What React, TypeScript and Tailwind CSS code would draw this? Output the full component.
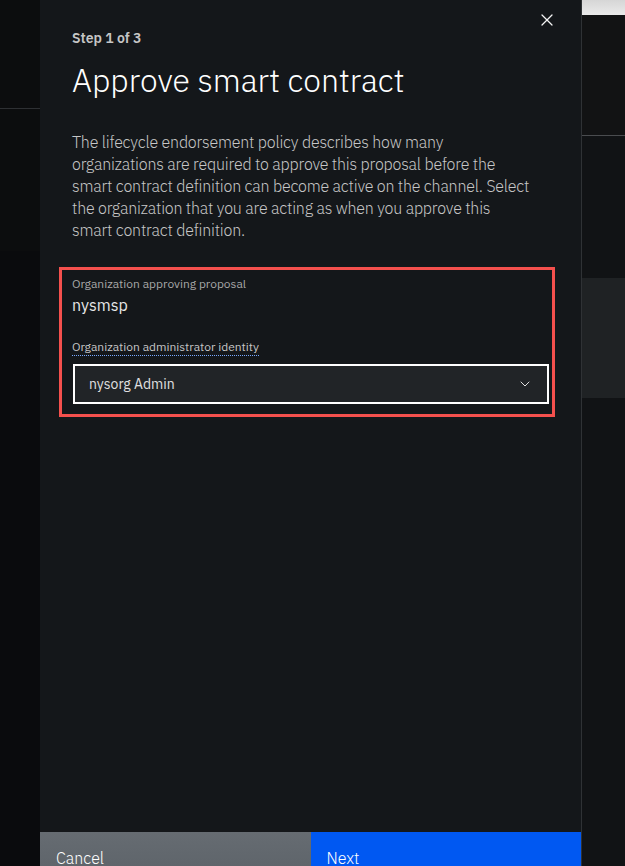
import React from "react";
import { X, ChevronDown } from "lucide-react";

const font = { fontFamily: '"IBM Plex Sans", Roboto, "Noto Sans", sans-serif' };

const App: React.FC = () => {
  return (
    <div
      className="flex h-[866px] w-full overflow-hidden bg-[#0b0c0e] text-[#f4f4f4]"
      style={font}
    >
      {/* left page behind the panel */}
      <div className="flex w-[40px] shrink-0 flex-col">
        <div className="h-[109px] border-b border-[#2e3033] bg-[#0c0d0e]" />
        <div className="h-[142px] bg-[#0c0d0e]" />
        <div className="flex-1 bg-[#0a0b0d]" />
      </div>

      {/* side panel */}
      <div className="relative flex w-[542px] shrink-0 flex-col border-r border-[#2f3235] bg-[#14171a]">
        <button className="absolute right-[24px] top-[10px] text-[#f4f4f4]">
          <X className="h-[20px] w-[20px]" strokeWidth={1.5} />
        </button>

        <div className="flex-1 px-8 pt-[29px]">
          <p className="text-[14px] font-semibold leading-[18px] text-[#c6c6c6]">Step 1 of 3</p>
          <h1 className="mt-[13px] text-[32px] font-light leading-[40px] text-white">
            Approve smart contract
          </h1>
          <p className="mt-[31px] whitespace-nowrap text-[16px] font-light leading-[22px] tracking-[-0.2px] text-[#c6c6c6]">
            The lifecycle endorsement policy describes how many
            <br />
            organizations are required to approve this proposal before the
            <br />
            smart contract definition can become active on the channel. Select
            <br />
            the organization that you are acting as when you approve this
            <br />
            smart contract definition.
          </p>

          <div className="-ml-[13px] -mr-[6px] mt-[26px] border-[3px] border-[#f4504d] pb-[10px] pl-[10px] pr-[3px] pt-[6px]">
            <p className="text-[12px] leading-[16px] text-[#a8a8a8]">Organization approving proposal</p>
            <p className="mt-[3px] text-[16px] leading-[20px] text-[#e8e8e8]">nysmsp</p>
            <div className="mt-[18px]">
              <span className="border-b border-dotted border-[#78a9ff] pb-[1px] text-[12px] leading-[16px] text-[#c6c6c6]">
                Organization administrator identity
              </span>
            </div>
            <div className="ml-px mt-[7px] flex h-[40px] items-center justify-between border-2 border-white bg-[#212427] pl-[14px] pr-[14px]">
              <span className="text-[14px] text-[#e0e0e0]">nysorg Admin</span>
              <ChevronDown className="h-[16px] w-[16px] text-[#e0e0e0]" strokeWidth={1.5} />
            </div>
          </div>
        </div>

        <div className="flex h-[64px] shrink-0 translate-y-[30px]">
          <button className="flex flex-1 items-start bg-gradient-to-b from-[#666c72] to-[#595f65] px-4 pt-[14px] text-left text-[16px] font-light text-white">
            Cancel
          </button>
          <button className="flex flex-1 items-start bg-[#0058f2] px-4 pt-[14px] text-left text-[16px] font-light text-white">
            Next
          </button>
        </div>
      </div>

      {/* right page behind the panel */}
      <div className="flex flex-1 flex-col">
        <div className="h-[15px] bg-gradient-to-b from-[#d6d6d6] to-[#eaeaea]" />
        <div className="h-[121px] border-b border-[#4a4c4f] bg-[#121314]" />
        <div className="h-[142px] bg-[#111315]" />
        <div className="h-[120px] bg-[#1f2224]" />
        <div className="flex-1 bg-[#111315]" />
      </div>
    </div>
  );
};

export default App;
